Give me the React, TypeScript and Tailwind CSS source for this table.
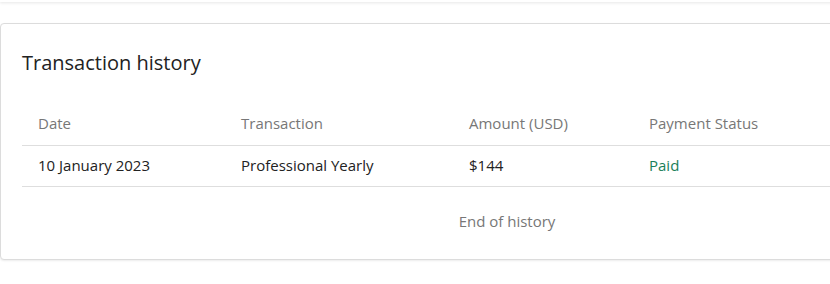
import React from 'react';

interface Transaction {
  date: string;
  name: string;
  amount: string;
  status: string;
}

const transactions: Transaction[] = [
  { date: '10 January 2023', name: 'Professional Yearly', amount: '$144', status: 'Paid' },
];

const App: React.FC = () => {
  return (
    <div className="w-[830px] h-[284px] overflow-hidden bg-white" style={{ fontFamily: '"Open Sans", sans-serif' }}>
      {/* previous card edge */}
      <div className="h-[2px] w-[1014px] bg-white shadow-[0_1px_3px_rgba(0,0,0,0.12)]" />

      <div className="mt-[21px] w-[1014px] rounded-[4px] border border-[#dcdcdc] bg-white px-[21px] pt-[25px] shadow-[0_1px_2px_rgba(0,0,0,0.08)]">
        <h2 className="text-[20px] leading-[28px] text-[#222]">Transaction history</h2>

        <table className="mt-[36px] w-full border-collapse text-[15px] leading-[20px]">
          <thead>
            <tr className="border-b border-[#dedede] text-left text-[#777]">
              <th className="w-[203px] px-4 pb-[12px] font-normal">Date</th>
              <th className="w-[228px] px-4 pb-[12px] font-normal">Transaction</th>
              <th className="w-[180px] px-4 pb-[12px] font-normal">Amount (USD)</th>
              <th className="px-4 pb-[12px] font-normal">Payment Status</th>
            </tr>
          </thead>
          <tbody>
            {transactions.map((t) => (
              <tr key={t.date} className="border-b border-[#dedede] text-[#222]">
                <td className="px-4 pt-[9px] pb-[11px]">{t.date}</td>
                <td className="px-4 pt-[9px] pb-[11px]">{t.name}</td>
                <td className="px-4 pt-[9px] pb-[11px]">{t.amount}</td>
                <td className="px-4 pt-[9px] pb-[11px] text-[#1a7f5a]">{t.status}</td>
              </tr>
            ))}
          </tbody>
        </table>

        <p className="pt-[24px] pb-[28px] text-center text-[15px] leading-[20px] text-[#777]">End of history</p>
      </div>
    </div>
  );
};

export default App;
